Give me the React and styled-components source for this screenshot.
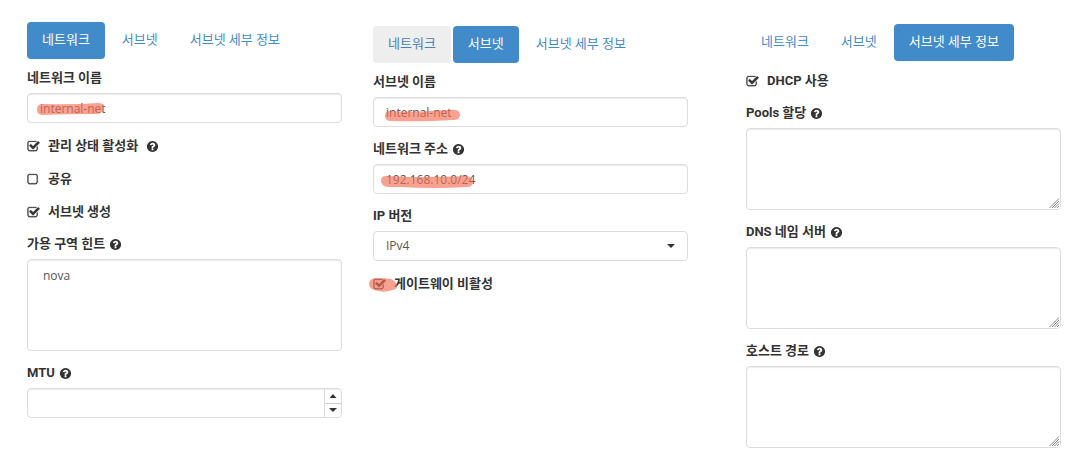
import React, { useId, useState } from 'react'
import styled, { createGlobalStyle, css } from 'styled-components'

const GlobalStyle = createGlobalStyle`
  *, *::before, *::after {
    box-sizing: border-box;
  }
  body {
    margin: 0;
    background: #fff;
    color: #333;
    font: 13px/18px Roboto, "Noto Sans CJK KR", sans-serif;
  }
`

const Page = styled.main`
  display: flex;
  align-items: flex-start;
  gap: 31px;
  padding: 0 22px 16px 27px;
`

const Panel = styled.form`
  flex: 1 1 0;
  min-width: 0;
  padding-top: ${({ $top }) => $top}px;

  &:last-child {
    margin-left: 27px;
  }
`

const Tabs = styled.nav`
  display: flex;
  gap: 2px;
  margin-bottom: 10px;
`

const Tab = styled.a`
  padding: 9px 15px 10px;
  border-radius: 4px;
  color: #428bca;
  text-decoration: none;
  white-space: nowrap;

  ${({ $hovered }) =>
    $hovered &&
    css`
      background: #eee;
      color: #4a82b4;
    `}

  ${({ $active }) =>
    $active &&
    css`
      background: #428bca;
      color: #fff;
    `}
`

const Fields = styled.div`
  display: flex;
  flex-flow: column;
  gap: 13px;
`

const Field = styled.div`
  display: flex;
  flex-flow: column;
  gap: 6px;
`

const LabelRow = styled.div`
  display: flex;
  align-items: center;
  gap: 4px;
  height: 18px;
`

const Label = styled.label`
  font-weight: 700;
`

const Control = styled.div`
  position: relative;
  display: flex;
`

const box = css`
  flex: 1;
  min-width: 0;
  margin: 0;
  padding: 5px 12px;
  border: 1px solid #ddd;
  border-radius: 4px;
  outline: 0;
  background: #fff;
  box-shadow: inset 0 1px 1px rgba(0, 0, 0, 0.08);
  color: #555;
  font: 12px/18px "Open Sans", "Noto Sans CJK KR", sans-serif;
`

const TextInput = styled.input`
  ${box}
  height: 30px;
  appearance: textfield;

  &::-webkit-inner-spin-button {
    display: none;
  }
`

const Select = styled.select`
  ${box}
  height: 30px;
  appearance: none;
  box-shadow: none;
`

const ListBox = styled.select`
  ${box}
  height: 92px;
  padding: 7px 13px;
  overflow: auto;
`

const TextArea = styled.textarea`
  ${box}
  height: 82px;
  resize: vertical;
`

const Grip = styled.svg`
  position: absolute;
  right: 1px;
  bottom: 1px;
  width: 12px;
  height: 12px;
  background: #fff;
  border-radius: 0 0 3px;
  pointer-events: none;
`

const Spinner = styled.div`
  position: absolute;
  top: 1px;
  right: 1px;
  bottom: 1px;
  display: flex;
  flex-flow: column;
  width: 17px;
  border-left: 1px solid #ddd;
`

const SpinButton = styled.button`
  display: flex;
  flex: 1;
  align-items: center;
  justify-content: center;
  padding: 0;
  border: 0;
  background: none;
  color: #333;

  & + & {
    border-top: 1px solid #ccc;
  }
`

const SelectCaret = styled.span`
  position: absolute;
  top: 0;
  right: 13px;
  bottom: 0;
  display: flex;
  align-items: center;
  pointer-events: none;
`

const CheckRow = styled.div`
  display: flex;
  align-items: center;
  gap: 8px;
  height: 20px;
`

const CheckLabel = styled.label`
  position: relative;
  display: flex;
  align-items: center;
  gap: 8px;
  font-weight: 700;
`

const CheckInput = styled.input`
  position: absolute;
  top: 2px;
  left: 0;
  width: 13px;
  height: 13px;
  margin: 0;
  opacity: 0;
`

const Glyph = styled.svg`
  flex: none;
  width: 13px;
  height: 13px;
  fill: currentColor;
`

const Marker = styled.svg`
  position: absolute;
  top: ${({ $y }) => $y}px;
  left: ${({ $x }) => $x}px;
  fill: #f66e55;
  fill-opacity: 0.65;
  pointer-events: none;
`

const CHECKED =
  'M1472 930v318q0 119-84.5 203.5t-203.5 84.5h-832q-119 0-203.5-84.5t-84.5-203.5v-832q0-119 84.5-203.5t203.5-84.5h832q63 0 117 25 15 7 18 23 3 17-9 29l-49 49q-10 10-23 10-3 0-9-2-23-6-45-6h-832q-66 0-113 47t-47 113v832q0 66 47 113t113 47h832q66 0 113-47t47-113v-254q0-13 9-22l64-64q10-10 23-10 6 0 12 3 20 8 20 29zm231-489l-814 814q-24 24-57 24t-57-24l-430-430q-24-24-24-57t24-57l110-110q24-24 57-24t57 24l263 263 647-647q24-24 57-24t57 24l110 110q24 24 24 57t-24 57z'
const UNCHECKED =
  'M1184 256h-832q-66 0-113 47t-47 113v832q0 66 47 113t113 47h832q66 0 113-47t47-113v-832q0-66-47-113t-113-47zm288 160v832q0 119-84.5 203.5t-203.5 84.5h-832q-119 0-203.5-84.5t-84.5-203.5v-832q0-119 84.5-203.5t203.5-84.5h832q119 0 203.5 84.5t84.5 203.5z'
const QUESTION =
  'M1024 1376v-192q0-14-9-23t-23-9h-192q-14 0-23 9t-9 23v192q0 14 9 23t23 9h192q14 0 23-9t9-23zm256-672q0-88-55.5-163t-138.5-116-170-41q-243 0-371 213-15 24 8 42l132 100q7 6 19 6 16 0 25-12 53-68 86-92 34-24 86-24 48 0 85.5 26t37.5 59q0 38-20 61t-68 45q-63 28-115.5 86.5t-52.5 125.5v36q0 14 9 23t23 9h192q14 0 23-9t9-23q0-19 21.5-49.5t54.5-49.5q32-18 49-28.5t46-35 44.5-48 28-60.5 12.5-81zm384 192q0 209-103 385.5t-279.5 279.5-385.5 103-385.5-103-279.5-279.5-103-385.5 103-385.5 279.5-279.5 385.5-103 385.5 103 279.5 279.5 103 385.5z'

const Icon = ({ d, stroke = 0 }) => (
  <Glyph viewBox="0 0 1792 1792" stroke="currentColor" strokeWidth={stroke} aria-hidden="true">
    <path d={d} />
  </Glyph>
)

const Caret = ({ up }) => (
  <svg width="8" height="4" viewBox="0 0 8 4" fill="#333" aria-hidden="true">
    <path d={up ? 'M0.5 4L4 0l3.500 4z' : 'M0 0h8L4 4z'} />
  </svg>
)

const FormField = ({ label, help, children }) => {
  const id = useId()
  return (
    <Field>
      <LabelRow>
        <Label htmlFor={id}>{label}</Label>
        {help && <Icon d={QUESTION} />}
      </LabelRow>
      <Control>{children(id)}</Control>
    </Field>
  )
}

const Checkbox = ({ label, help, initial = false, children }) => {
  const [checked, setChecked] = useState(initial)
  return (
    <CheckRow>
      <CheckLabel>
        <CheckInput
          type="checkbox"
          checked={checked}
          onChange={e => setChecked(e.target.checked)}
        />
        <Icon d={checked ? CHECKED : UNCHECKED} stroke={40} />
        {label}
        {children}
      </CheckLabel>
      {help && <Icon d={QUESTION} />}
    </CheckRow>
  )
}

const TABS = ['네트워크', '서브넷', '서브넷 세부 정보']

const TabBar = ({ active, hovered }) => (
  <Tabs>
    {TABS.map((name, i) => (
      <Tab key={name} href="#" $active={i === active} $hovered={i === hovered}>
        {name}
      </Tab>
    ))}
  </Tabs>
)

const NumberInput = ({ id }) => {
  const [value, setValue] = useState('')
  const step = by => setValue(v => String(Math.max(0, Number(v) + by)))
  return (
    <>
      <TextInput id={id} type="number" value={value} onChange={e => setValue(e.target.value)} />
      <Spinner>
        <SpinButton type="button" aria-label="+" onClick={() => step(1)}>
          <Caret up />
        </SpinButton>
        <SpinButton type="button" aria-label="-" onClick={() => step(-1)}>
          <Caret />
        </SpinButton>
      </Spinner>
    </>
  )
}

const NetworkPanel = () => (
  <Panel $top={22}>
    <TabBar active={0} />
    <Fields>
      <FormField label="네트워크 이름">
        {id => (
          <>
            <TextInput id={id} type="text" defaultValue="internal-net" />
            <Marker $x={10} $y={10} width="68" height="13" viewBox="0 0 68 13">
              <path d="M6 1Q34 2 61 0q6 0 6 5t-7 6q-30 0-54 1Q0 12 0 6.500T6 1z" />
            </Marker>
          </>
        )}
      </FormField>
      <Checkbox label="관리 상태 활성화" help initial />
      <Checkbox label="공유" />
      <Checkbox label="서브넷 생성" initial />
      <FormField label="가용 구역 힌트" help>
        {id => (
          <ListBox id={id} multiple>
            <option>nova</option>
          </ListBox>
        )}
      </FormField>
      <FormField label="MTU" help>
        {id => <NumberInput id={id} />}
      </FormField>
    </Fields>
  </Panel>
)

const SubnetPanel = () => (
  <Panel $top={26}>
    <TabBar active={1} hovered={0} />
    <Fields>
      <FormField label="서브넷 이름">
        {id => (
          <>
            <TextInput id={id} type="text" defaultValue="internal-net" />
            <Marker $x={12} $y={13} width="76" height="12" viewBox="0 0 76 12">
              <path d="M5 1q22 1 42 0 12-1 22-1 6 0 6 5t-7 5q-30 2-62 1-6 0-6-5t5-5z" />
            </Marker>
          </>
        )}
      </FormField>
      <FormField label="네트워크 주소" help>
        {id => (
          <>
            <TextInput id={id} type="text" defaultValue="192.168.10.0/24" />
            <Marker $x={8} $y={12} width="92" height="12" viewBox="0 0 92 12">
              <path d="M5 0q10 0 20 1 34 0 60-1 7 1 7 6t-6 5q-34 2-66 0H7Q0 10 0 5t5-5z" />
            </Marker>
          </>
        )}
      </FormField>
      <FormField label="IP 버전">
        {id => (
          <>
            <Select id={id}>
              <option>IPv4</option>
              <option>IPv6</option>
            </Select>
            <SelectCaret>
              <Caret />
            </SelectCaret>
          </>
        )}
      </FormField>
      <Checkbox label="게이트웨이 비활성" initial>
        <Marker $x={-4} $y={3} width="28" height="14" viewBox="0 0 28 14">
          <path d="M6 0q10 0 16 1 5 2 6 7 0 4-5 4-7 3-13 1Q0 12 0 6q0-5 6-6z" />
        </Marker>
      </Checkbox>
    </Fields>
  </Panel>
)

const DetailPanel = () => (
  <Panel $top={24}>
    <TabBar active={2} />
    <Fields>
      <Checkbox label="DHCP 사용" initial />
      {['Pools 할당', 'DNS 네임 서버', '호스트 경로'].map(label => (
        <FormField key={label} label={label} help>
          {id => (
            <>
              <TextArea id={id} />
              <Grip viewBox="0 0 12 12" stroke="#888" aria-hidden="true">
                <path d="M1.500 11L11 1.500M4 11l7-7M6.500 11L11 6.500M9 11l2-2" />
              </Grip>
            </>
          )}
        </FormField>
      ))}
    </Fields>
  </Panel>
)

const App = () => (
  <>
    <GlobalStyle />
    <Page>
      <NetworkPanel />
      <SubnetPanel />
      <DetailPanel />
    </Page>
  </>
)

export default App
